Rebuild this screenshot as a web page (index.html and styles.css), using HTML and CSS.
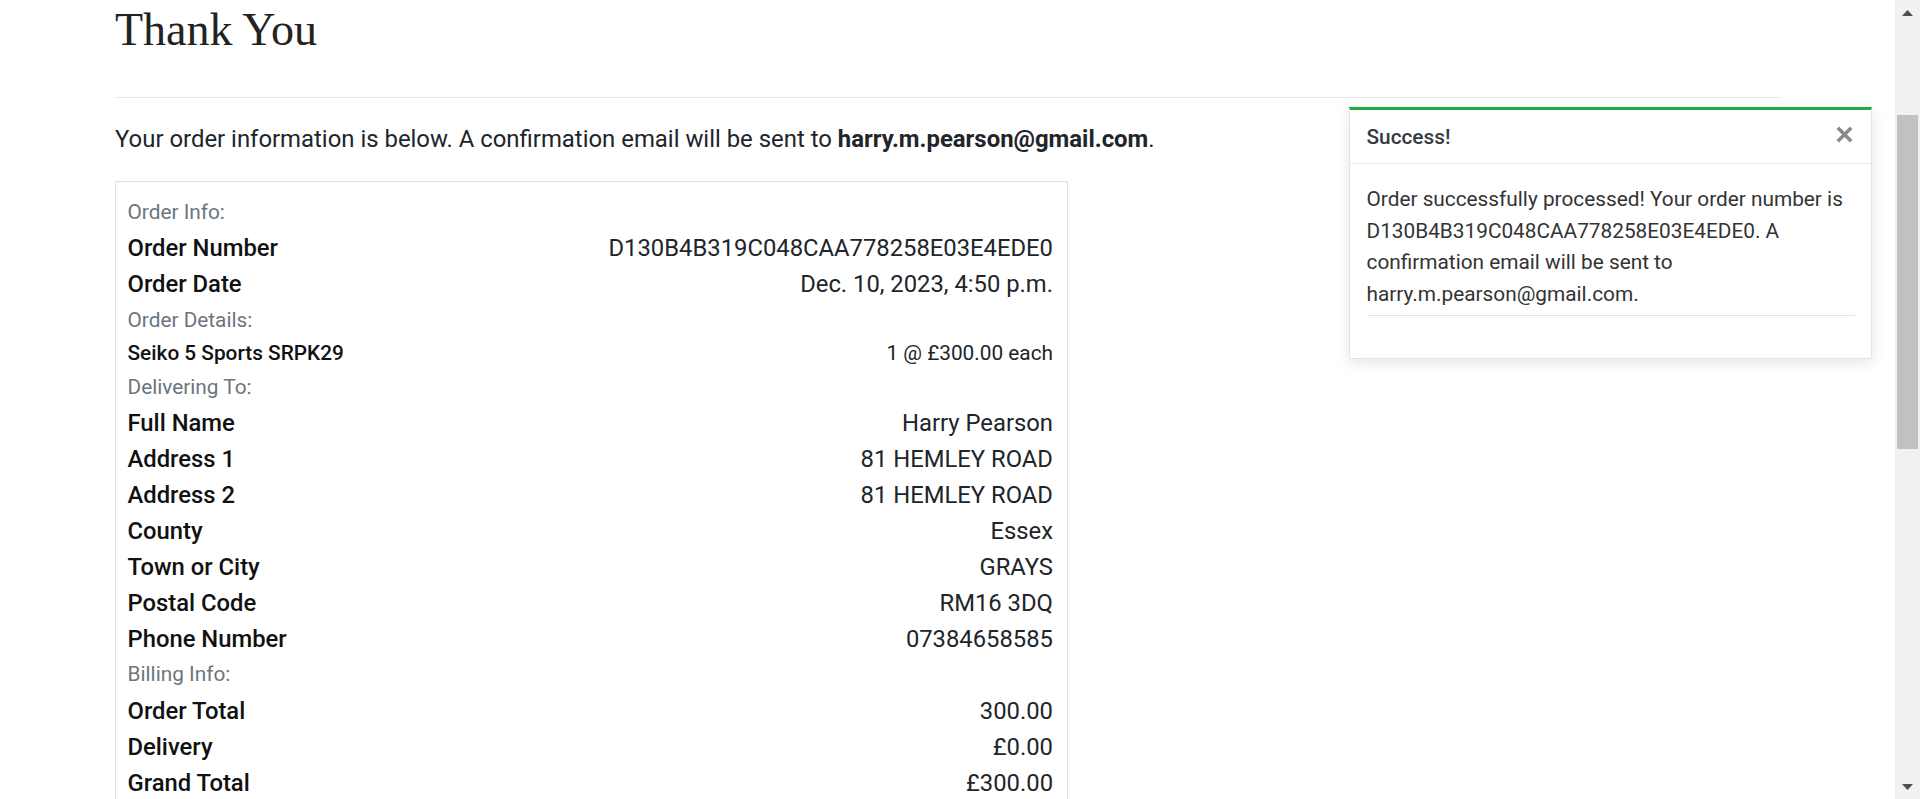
FILE: index.html
```html
<!DOCTYPE html>
<html lang="en">
<head>
<meta charset="utf-8">
<title>Thank You</title>
<link rel="stylesheet" href="styles.css">
</head>
<body>
<div class="viewport">
  <main class="page">
    <div class="container">
      <h1 class="title">Thank You</h1>
      <hr class="rule">
      <p class="lead">Your order information is below. A confirmation email will be sent to <strong>harry.m.pearson@gmail.com</strong>.</p>
      <section class="order-card">
        <p class="section-label">Order Info:</p>
        <div class="line"><span class="key">Order Number</span><span class="val">D130B4B319C048CAA778258E03E4EDE0</span></div>
        <div class="line"><span class="key">Order Date</span><span class="val">Dec. 10, 2023, 4:50 p.m.</span></div>
        <p class="section-label">Order Details:</p>
        <div class="line line-item"><span class="key">Seiko 5 Sports SRPK29</span><span class="val">1 @ £300.00 each</span></div>
        <p class="section-label">Delivering To:</p>
        <div class="line"><span class="key">Full Name</span><span class="val">Harry Pearson</span></div>
        <div class="line"><span class="key">Address 1</span><span class="val">81 HEMLEY ROAD</span></div>
        <div class="line"><span class="key">Address 2</span><span class="val">81 HEMLEY ROAD</span></div>
        <div class="line"><span class="key">County</span><span class="val">Essex</span></div>
        <div class="line"><span class="key">Town or City</span><span class="val">GRAYS</span></div>
        <div class="line"><span class="key">Postal Code</span><span class="val">RM16 3DQ</span></div>
        <div class="line"><span class="key">Phone Number</span><span class="val">07384658585</span></div>
        <p class="section-label">Billing Info:</p>
        <div class="line"><span class="key">Order Total</span><span class="val">300.00</span></div>
        <div class="line"><span class="key">Delivery</span><span class="val">£0.00</span></div>
        <div class="line"><span class="key">Grand Total</span><span class="val">£300.00</span></div>
      </section>
    </div>

    <div class="toast" role="alert">
      <div class="toast-header">
        <strong class="toast-title">Success!</strong>
        <button class="close" type="button" aria-label="Close">
          <svg width="17" height="17" viewBox="0 0 17 17" aria-hidden="true"><path d="M1.8 1.8 L15.2 15.2 M15.2 1.8 L1.8 15.2" stroke="#8a8a8a" stroke-width="3.6" stroke-linecap="butt"/></svg>
        </button>
      </div>
      <div class="toast-body">
        <p>Order successfully processed! Your order number is D130B4B319C048CAA778258E03E4EDE0. A confirmation email will be sent to harry.m.pearson@gmail.com.</p>
        <hr class="toast-rule">
      </div>
    </div>
  </main>

  <div class="scrollbar" aria-hidden="true">
    <div class="sb-btn"><svg width="11" height="6" viewBox="0 0 11 6"><polygon points="0,6 5.5,0 11,6" fill="#505050"/></svg></div>
    <div class="sb-thumb"></div>
    <div class="sb-fill"></div>
    <div class="sb-btn"><svg width="11" height="6" viewBox="0 0 11 6"><polygon points="0,0 11,0 5.5,6" fill="#505050"/></svg></div>
  </div>
</div>
</body>
</html>
```

FILE: styles.css
```css
html, body {
  margin: 0;
  height: 100%;
}

body {
  font-family: Roboto, "Noto Sans", "Liberation Sans", sans-serif;
  color: #212529;
  background: #fff;
  overflow: hidden;
}

.viewport {
  display: flex;
  height: 100vh;
}

.page {
  flex: 1;
  min-width: 0;
  position: relative;
  overflow: hidden;
}

.container {
  width: 1665px;
  margin: 0 auto;
}

.title {
  font-family: "Liberation Serif", "Times New Roman", serif;
  font-weight: 400;
  font-size: 46px;
  line-height: 53.4px;
  margin: 3.3px 0 0;
  color: #222;
}

.rule {
  border: 0;
  border-top: 1px solid #e6e6e6;
  margin: 40px 0 0;
}

.lead {
  font-size: 23.9px;
  line-height: 35.7px;
  margin: 24.3px 0 0;
}

.lead strong {
  font-weight: 700;
}

.order-card {
  width: 953px;
  box-sizing: border-box;
  border: 1px solid #e0e0e0;
  margin-top: 23.3px;
  padding: 12.5px 14px 40px 11.5px;
}

.section-label {
  font-size: 20.8px;
  line-height: 31.2px;
  color: #6c757d;
  margin: 2.5px 0 2px;
}

.line {
  display: flex;
  justify-content: space-between;
  align-items: baseline;
  font-size: 23.8px;
  line-height: 36px;
}

.line-item {
  font-size: 20.8px;
  line-height: 31.2px;
}

.key {
  font-weight: 500;
  color: #111;
}

.val {
  color: #212529;
}

/* toast */
.toast {
  position: absolute;
  top: 107px;
  right: 23px;
  width: 523px;
  box-sizing: border-box;
  background: #fff;
  border: 1px solid rgba(0, 0, 0, 0.1);
  border-top: 3px solid #28a745;
  box-shadow: 0 4px 14px rgba(0, 0, 0, 0.1);
}

.toast-header {
  display: flex;
  align-items: center;
  justify-content: space-between;
  padding: 11.6px 16.5px 10.5px;
  border-bottom: 1px solid #e9ecef;
  font-size: 20.8px;
  line-height: 31.2px;
}

.toast-title {
  font-weight: 500;
  color: #343a40;
}

.close {
  display: flex;
  padding: 0;
  margin: 0 2px 5px 0;
  border: 0;
  background: none;
}

.toast-body {
  padding: 20px 16.5px 17px;
  font-size: 20.8px;
  line-height: 31.6px;
  color: #333;
}

.toast-body p {
  margin: 0;
}

.toast-rule {
  border: 0;
  border-top: 1px solid #e3e3e3;
  margin: 4.5px 0 24.5px;
}

/* scrollbar rail */
.scrollbar {
  width: 25px;
  flex: 0 0 25px;
  background: #f1f1f1;
  display: flex;
  flex-direction: column;
  align-items: center;
}

.sb-btn {
  height: 25px;
  width: 25px;
  display: flex;
  align-items: center;
  justify-content: center;
}

.sb-thumb {
  width: 21px;
  height: 334px;
  margin-top: 90px;
  background: #c1c1c1;
}

.sb-fill {
  flex: 1;
}
```
